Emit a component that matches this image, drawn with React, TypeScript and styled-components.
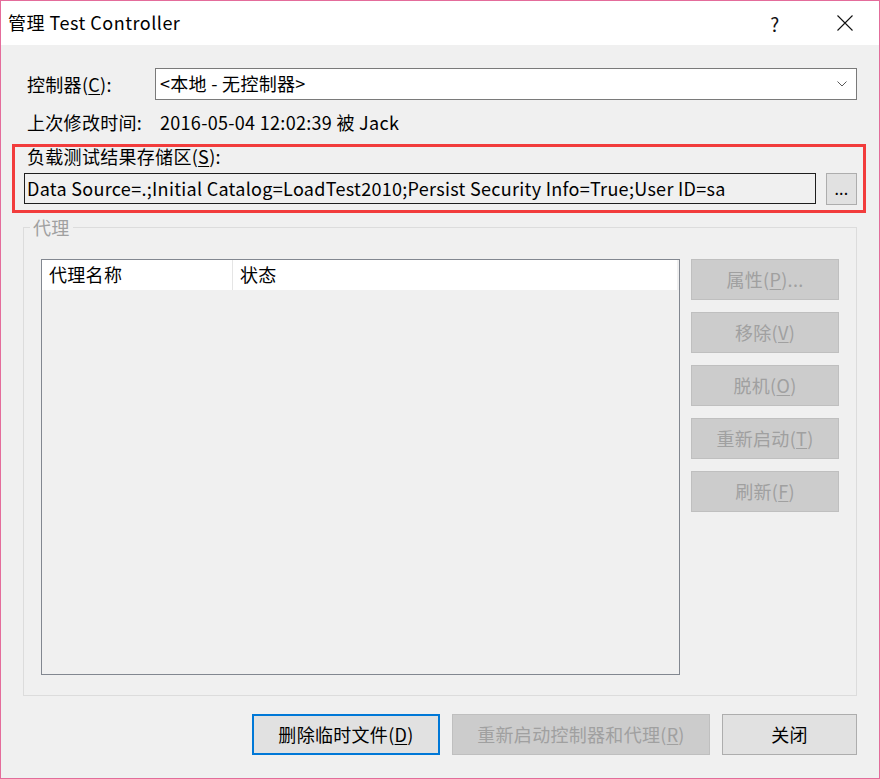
import * as React from 'react';
import styled, { createGlobalStyle } from 'styled-components';

const Global = createGlobalStyle`
  html, body {
    margin: 0;
    padding: 0;
    background: #ffffff;
  }
  * {
    box-sizing: border-box;
  }
`;

const FONT = `"Noto Sans CJK SC", "Noto Sans", sans-serif`;

const Win = styled.div`
  width: 880px;
  height: 779px;
  border: 1px solid #e46c9b;
  background: #f0f0f0;
  display: flex;
  flex-direction: column;
  font-family: ${FONT};
  font-size: 18px;
  letter-spacing: 0.3px;
  color: #000;
`;

const TitleBar = styled.div`
  height: 44px;
  background: #ffffff;
  display: flex;
  align-items: center;
  padding-left: 7px;
`;

const Title = styled.div`
  flex: 1;
  font-size: 18px;
  letter-spacing: 0.5px;
  line-height: 24px;
  margin-top: -2px;
`;

const TitleBtn = styled.div<{ $w: number }>`
  width: ${(p) => p.$w}px;
  height: 44px;
  display: flex;
  align-items: center;
  justify-content: center;
  font-size: 19px;
  color: #111;
`;

const Body = styled.div`
  flex: 1;
  display: flex;
  flex-direction: column;
  padding: 23px 22px 0 23px;
`;

const Row = styled.div<{ $mt?: number; $h: number }>`
  display: flex;
  align-items: center;
  height: ${(p) => p.$h}px;
  margin-top: ${(p) => p.$mt ?? 0}px;
`;

const Label = styled.div`
  width: 131px;
  padding-left: 3px;
  white-space: nowrap;
  line-height: 20px;
`;

const Value = styled.div`
  padding-left: 5px;
  line-height: 20px;
`;

const Combo = styled.div`
  flex: 1;
  height: 32px;
  background: #fff;
  border: 1px solid #7a7a7a;
  display: flex;
  align-items: center;
  padding-left: 4px;
  padding-right: 9px;
`;

const ComboText = styled.div`
  flex: 1;
  line-height: 20px;
  padding-bottom: 2px;
`;

const Key = styled.span`
  text-decoration: underline;
  text-underline-offset: 2px;
  text-decoration-thickness: 1px;
`;

const Highlight = styled.div`
  margin: 12px -9px 0 -12px;
  border: 3px solid #f23c3c;
  padding: 0 6px 5px 9px;
  display: flex;
  flex-direction: column;
`;

const StoreLabel = styled.div`
  height: 20px;
  line-height: 20px;
  padding-left: 3px;
  margin-top: -1px;
  margin-bottom: 2px;
`;

const StoreRow = styled.div`
  display: flex;
  align-items: flex-start;
  gap: 10px;
  margin-top: 5px;
`;

const TextBox = styled.div`
  flex: 1;
  height: 31px;
  border: 1px solid #1e1e1e;
  background: #f0f0f0;
  display: flex;
  align-items: center;
  padding-left: 2px;
  padding-bottom: 2px;
  white-space: nowrap;
  overflow: hidden;
`;

const SmallBtn = styled.div`
  width: 31px;
  height: 32px;
  background: #e1e1e1;
  border: 1px solid #adadad;
  display: flex;
  align-items: center;
  justify-content: center;
  font-size: 16px;
  padding-bottom: 2px;
`;

const Group = styled.fieldset`
  margin: 4px 0 0 -1px;
  border: 1px solid #dcdcdc;
  padding: 22px 17px 20px 17px;
  display: flex;
  gap: 11px;
  min-width: 0;
`;

const Legend = styled.legend`
  padding: 0 3px;
  margin-left: -11px;
  line-height: 20px;
  color: #a0a0a0;
`;

const List = styled.div`
  width: 639px;
  height: 416px;
  border: 1px solid #828790;
  background: #f0f0f0;
  display: flex;
  flex-direction: column;
`;

const Header = styled.div`
  height: 30px;
  background: #fff;
  display: flex;
  margin-right: 2px;
`;

const HeadCell = styled.div<{ $w?: number }>`
  ${(p) => (p.$w ? `width: ${p.$w}px;` : 'flex: 1;')}
  padding-left: 7px;
  padding-bottom: 2px;
  display: flex;
  align-items: center;
  border-right: ${(p) => (p.$w ? '1px solid #e5e5e5' : 'none')};
  line-height: 20px;
`;

const Side = styled.div`
  display: flex;
  flex-direction: column;
  gap: 12px;
`;

const Button = styled.div<{ $w?: number; $disabled?: boolean; $default?: boolean }>`
  width: ${(p) => p.$w ?? 148}px;
  height: 41px;
  display: flex;
  align-items: center;
  justify-content: center;
  white-space: nowrap;
  line-height: 20px;
  padding-bottom: 2px;
  background: ${(p) => (p.$disabled ? '#cccccc' : '#e1e1e1')};
  color: ${(p) => (p.$disabled ? '#a0a0a0' : '#000')};
  border: ${(p) =>
    p.$default ? '2px solid #0078d7' : p.$disabled ? '1px solid #bfbfbf' : '1px solid #adadad'};
`;

const Footer = styled.div`
  display: flex;
  justify-content: flex-end;
  gap: 12px;
  margin-top: 18px;
`;

const Chevron = () => (
  <svg width="10" height="6" viewBox="0 0 10 6">
    <path d="M0.5 0.5 L5 5 L9.5 0.5" fill="none" stroke="#5a5a5a" strokeWidth="1" />
  </svg>
);

const CloseIcon = () => (
  <svg width="16" height="16" viewBox="0 0 16 16">
    <path d="M0.5 0.5 L15.5 15.5 M15.5 0.5 L0.5 15.5" stroke="#111" strokeWidth="1.1" fill="none" />
  </svg>
);

const sideButtons: [string, string, string][] = [
  ['属性(', 'P', ')...'],
  ['移除(', 'V', ')'],
  ['脱机(', 'O', ')'],
  ['重新启动(', 'T', ')'],
  ['刷新(', 'F', ')'],
];

const App = () => {
  return (
    <>
      <Global />
      <Win>
        <TitleBar>
          <Title>管理 Test Controller</Title>
          <TitleBtn $w={72}>?</TitleBtn>
          <TitleBtn $w={68}>
            <CloseIcon />
          </TitleBtn>
        </TitleBar>
        <Body>
          <Row $h={32}>
            <Label>
              控制器(<Key>C</Key>):
            </Label>
            <Combo>
              <ComboText>&lt;本地 - 无控制器&gt;</ComboText>
              <Chevron />
            </Combo>
          </Row>
          <Row $h={20} $mt={12}>
            <Label>上次修改时间:</Label>
            <Value>2016-05-04 12:02:39 被 Jack</Value>
          </Row>
          <Highlight>
            <StoreLabel>
              负载测试结果存储区(<Key>S</Key>):
            </StoreLabel>
            <StoreRow>
              <TextBox>
                Data Source=.;Initial Catalog=LoadTest2010;Persist Security Info=True;User ID=sa
              </TextBox>
              <SmallBtn>...</SmallBtn>
            </StoreRow>
          </Highlight>
          <Group>
            <Legend>代理</Legend>
            <List>
              <Header>
                <HeadCell $w={191}>代理名称</HeadCell>
                <HeadCell>状态</HeadCell>
              </Header>
            </List>
            <Side>
              {sideButtons.map(([a, k, b]) => (
                <Button key={k} $disabled>
                  {a}
                  <Key>{k}</Key>
                  {b}
                </Button>
              ))}
            </Side>
          </Group>
          <Footer>
            <Button $w={188} $default>
              删除临时文件(<Key>D</Key>)
            </Button>
            <Button $w={258} $disabled>
              重新启动控制器和代理(<Key>R</Key>)
            </Button>
            <Button $w={135}>关闭</Button>
          </Footer>
        </Body>
      </Win>
    </>
  );
};

export default App;
